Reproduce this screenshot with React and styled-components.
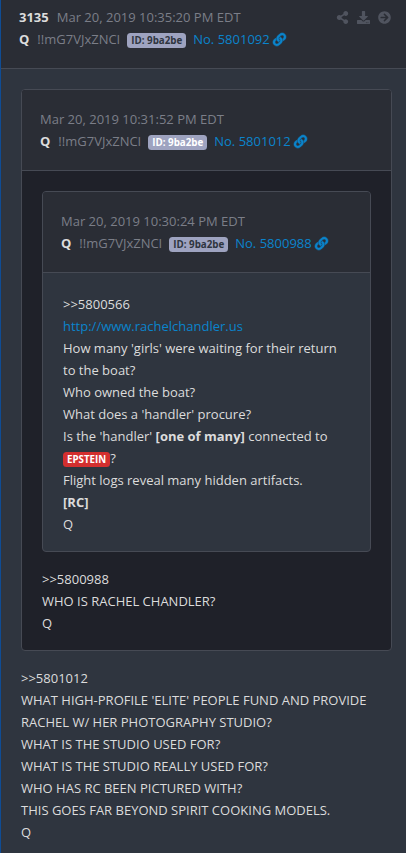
import React from 'react';
import styled, { createGlobalStyle } from 'styled-components';
import { FaShareAlt, FaDownload, FaArrowCircleRight, FaLink } from 'react-icons/fa';

const GlobalStyle = createGlobalStyle`
  * { box-sizing: border-box; }
  body {
    margin: 0;
    background: #2f353f;
    color: #dcdcdc;
    font: 13px/22px "Open Sans", "Noto Sans", sans-serif;
    overflow: hidden;
  }
`;

const Page = styled.main`
  width: 406px;
  height: 853px;
  overflow: hidden;
  border-left: 1px solid #0f4c94;
  background: #2f353f;
`;

const Card = styled.article`
  border: 1px solid #464a54;
  border-radius: 4px;
  overflow: hidden;
  margin-bottom: 16px;
  background: ${({ $dark }) => ($dark ? '#1f2129' : '#2f353f')};
`;

const CardHeader = styled.header`
  display: flex;
  justify-content: space-between;
  align-items: flex-start;
  padding: ${({ $top }) => ($top ? '6px 15px 18px 18px' : '18px')};
  background: #2a2d35;
  border-bottom: 1px solid #464a54;
`;

const CardBody = styled.div`
  padding: ${({ $top }) => ($top ? '20px 14px 16px 20px' : '20px 20px 16px')};
`;

const MetaRow = styled.div`
  display: flex;
  align-items: center;
  height: 22px;
  white-space: nowrap;
`;

const Strong = styled.strong`
  font-weight: 700;
  margin-right: 8px;
`;

const Muted = styled.span`
  color: #7b7e88;
`;

const IdBadge = styled.span`
  display: block;
  width: 59px;
  height: 15px;
  margin: 3px 7px 0;
  border-radius: 3.5px;
  background: #9ea3c0;
  color: ${({ $light }) => ($light ? '#ffffff' : '#2f353f')};
  font-size: 9.75px;
  font-weight: 700;
  line-height: 15px;
  text-align: center;
`;

const Anchor = styled.a`
  color: #0a84cc;
  text-decoration: none;
`;

const PostAnchor = styled(Anchor)`
  display: flex;
  align-items: center;
  gap: 3px;
`;

const LinkIcon = styled(FaLink)`
  width: 13px;
  height: 13px;
  stroke: currentColor;
  stroke-width: 22px;
  overflow: visible;
`;

const Actions = styled.div`
  display: flex;
  align-items: center;
  gap: 8px;
  height: 22px;
  color: #50545f;
`;

const Line = styled.div`
  min-height: 22px;
`;

const NameTag = styled.span`
  height: 15px;
  margin-top: 5px;
  padding: 0 4px;
  border-radius: 3.5px;
  background: #d32f2f;
  color: #fff;
  font-size: 9.75px;
  font-weight: 700;
  line-height: 15px;
`;

const TagLine = styled(Line)`
  display: flex;
  align-items: flex-start;
  height: 22px;
`;

function Meta({ number, date, post, light }) {
  return (
    <div>
      <MetaRow>
        {number && <Strong>{number}</Strong>}
        <Muted>{date}</Muted>
      </MetaRow>
      <MetaRow>
        <Strong>Q</Strong>
        <Muted>!!mG7VJxZNCI</Muted>
        <IdBadge $light={light}>ID: 9ba2be</IdBadge>
        <PostAnchor href="#">
          No. {post}
          <LinkIcon />
        </PostAnchor>
      </MetaRow>
    </div>
  );
}

export default function App() {
  return (
    <>
      <GlobalStyle />
      <Page>
        <CardHeader $top>
          <Meta number="3135" date="Mar 20, 2019 10:35:20 PM EDT" post="5801092" />
          <Actions>
            <FaShareAlt size={13} />
            <FaDownload size={13} />
            <FaArrowCircleRight size={13} />
          </Actions>
        </CardHeader>
        <CardBody $top>
          <Card $dark>
            <CardHeader>
              <Meta date="Mar 20, 2019 10:31:52 PM EDT" post="5801012" light />
            </CardHeader>
            <CardBody>
              <Card>
                <CardHeader>
                  <Meta date="Mar 20, 2019 10:30:24 PM EDT" post="5800988" />
                </CardHeader>
                <CardBody>
                  <Line>&gt;&gt;5800566</Line>
                  <Line><Anchor href="#">http://www.rachelchandler.us</Anchor></Line>
                  <Line>How many 'girls' were waiting for their return to the boat?</Line>
                  <Line>Who owned the boat?</Line>
                  <Line>What does a 'handler' procure?</Line>
                  <Line>Is the 'handler' <b>[one of many]</b> connected to</Line>
                  <TagLine><NameTag>EPSTEIN</NameTag>?</TagLine>
                  <Line>Flight logs reveal many hidden artifacts.</Line>
                  <Line><b>[RC]</b></Line>
                  <Line>Q</Line>
                </CardBody>
              </Card>
              <Line>&gt;&gt;5800988</Line>
              <Line>WHO IS RACHEL CHANDLER?</Line>
              <Line>Q</Line>
            </CardBody>
          </Card>
          <Line>&gt;&gt;5801012</Line>
          <Line>WHAT HIGH-PROFILE 'ELITE' PEOPLE FUND AND PROVIDE RACHEL W/ HER PHOTOGRAPHY STUDIO?</Line>
          <Line>WHAT IS THE STUDIO USED FOR?</Line>
          <Line>WHAT IS THE STUDIO REALLY USED FOR?</Line>
          <Line>WHO HAS RC BEEN PICTURED WITH?</Line>
          <Line>THIS GOES FAR BEYOND SPIRIT COOKING MODELS.</Line>
          <Line>Q</Line>
        </CardBody>
      </Page>
    </>
  );
}
